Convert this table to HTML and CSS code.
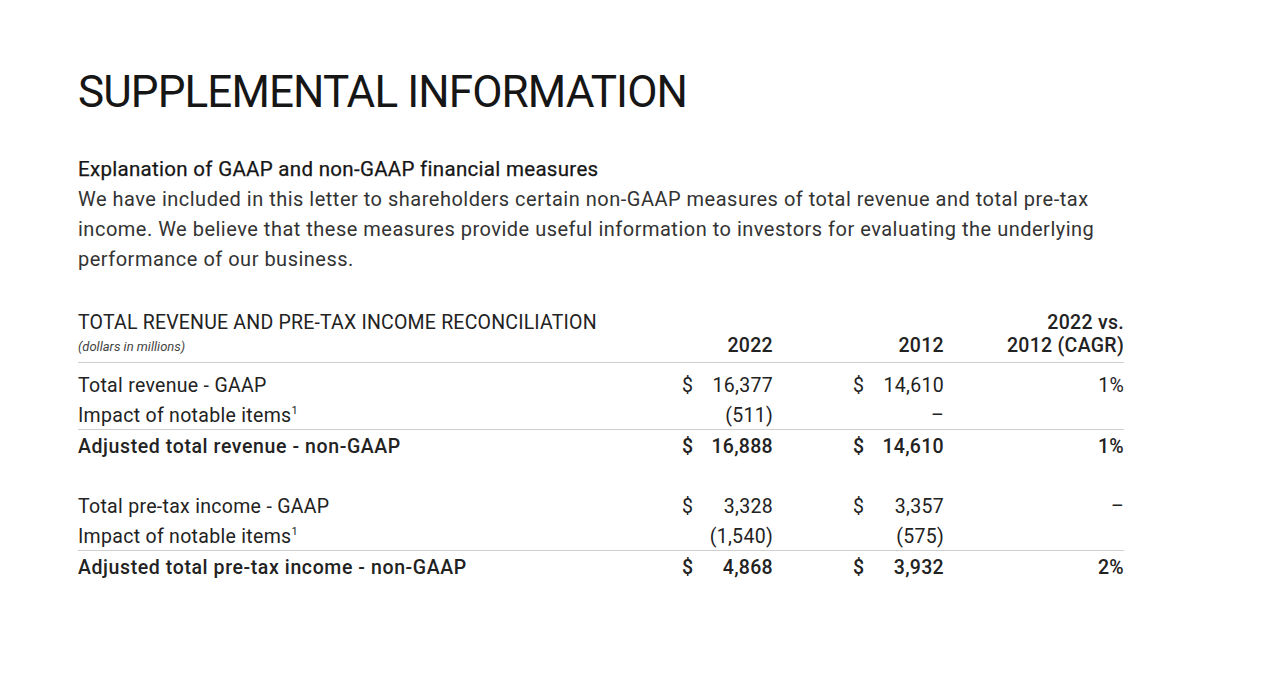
FILE: index.html
```html
<!DOCTYPE html>
<html lang="en">
<head>
<meta charset="utf-8">
<title>Supplemental Information</title>
<link rel="stylesheet" href="styles.css">
</head>
<body>
<main class="page">
  <h1 class="title">SUPPLEMENTAL INFORMATION</h1>
  <section class="intro">
    <h2 class="subhead">Explanation of GAAP and non-GAAP financial measures</h2>
    <p class="para">We have included in this letter to shareholders certain non-GAAP measures of total revenue and total pre-tax income. We believe that these measures provide useful information to investors for evaluating the underlying performance of our business.</p>
  </section>
  <section class="recon">
    <div class="row head">
      <div class="label">
        <div class="tname">TOTAL REVENUE AND PRE-TAX INCOME RECONCILIATION</div>
        <div class="unit">(dollars in millions)</div>
      </div>
      <div class="yr">2022</div>
      <div class="yr">2012</div>
      <div class="yr">2022 vs.<br>2012 (CAGR)</div>
    </div>
    <div class="row r1">
      <div class="label">Total revenue - GAAP</div>
      <div class="dol">$</div><div class="num">16,377</div>
      <div class="dol d2">$</div><div class="num">14,610</div>
      <div class="pct">1%</div>
    </div>
    <div class="row">
      <div class="label">Impact of notable items<sup>1</sup></div>
      <div class="dol"></div><div class="num">(511)</div>
      <div class="dol d2"></div><div class="num">–</div>
      <div class="pct"></div>
    </div>
    <div class="row total">
      <div class="label">Adjusted total revenue - non-GAAP</div>
      <div class="dol">$</div><div class="num">16,888</div>
      <div class="dol d2">$</div><div class="num">14,610</div>
      <div class="pct">1%</div>
    </div>
    <div class="row first">
      <div class="label">Total pre-tax income - GAAP</div>
      <div class="dol">$</div><div class="num">3,328</div>
      <div class="dol d2">$</div><div class="num">3,357</div>
      <div class="pct">–</div>
    </div>
    <div class="row">
      <div class="label">Impact of notable items<sup>1</sup></div>
      <div class="dol"></div><div class="num">(1,540)</div>
      <div class="dol d2"></div><div class="num">(575)</div>
      <div class="pct"></div>
    </div>
    <div class="row total">
      <div class="label">Adjusted total pre-tax income - non-GAAP</div>
      <div class="dol">$</div><div class="num">4,868</div>
      <div class="dol d2">$</div><div class="num">3,932</div>
      <div class="pct">2%</div>
    </div>
  </section>
</main>
</body>
</html>
```
FILE: styles.css
```css
* { box-sizing: border-box; }
html, body { margin: 0; padding: 0; background: #fff; }
body {
  font-family: Roboto, "Liberation Sans", sans-serif;
  color: #1e1e1e;
}
.page {
  padding: 69px 0 0 78px;
  width: 1124px;
}
.title {
  margin: 0;
  font-size: 44px;
  font-weight: 400;
  line-height: 46px;
  letter-spacing: -0.9px;
  color: #161616;
}
.intro { margin-top: 39px; }
.subhead {
  margin: 0;
  font-size: 20.5px;
  font-weight: 400;
  line-height: 30px;
  letter-spacing: 0.3px;
  color: #161616;
  -webkit-text-stroke: 0.25px #161616;
}
.para {
  margin: 0;
  font-size: 20px;
  line-height: 30px;
  color: #333;
  letter-spacing: 0.5px;
}
.recon { margin-top: 37px; width: 1046px; }
.row {
  display: grid;
  grid-template-columns: 602px 20px 73px 98px 73px 180px;
  align-items: baseline;
  font-size: 19.5px;
  line-height: 30px;
  color: #222;
  letter-spacing: 0.3px;
}
.row.head {
  grid-template-columns: 602px 93px 171px 180px;
  align-items: end;
  border-bottom: 1px solid #cfcfcf;
  padding-bottom: 5px;
  line-height: 23px;
}
.tname { font-size: 19.5px; letter-spacing: 0.2px; }
.unit { margin-top: 3px; font-size: 13px; font-style: italic; color: #444; line-height: 20px; letter-spacing: 0; }
.yr { text-align: right; font-weight: 500; }
.dol { text-align: left; padding-left: 2px; }
.d2 { padding-left: 80px; }
.num { text-align: right; }
.pct { text-align: right; }
.row.r1 { margin-top: 8px; }
.row.total { border-top: 1px solid #cfcfcf; font-weight: 500; margin-top: -2px; padding-top: 2px; }
.row.total .label { letter-spacing: 0.6px; }
.row.first { margin-top: 30px; }
sup { font-size: 11px; line-height: 0; vertical-align: 8px; }
```
